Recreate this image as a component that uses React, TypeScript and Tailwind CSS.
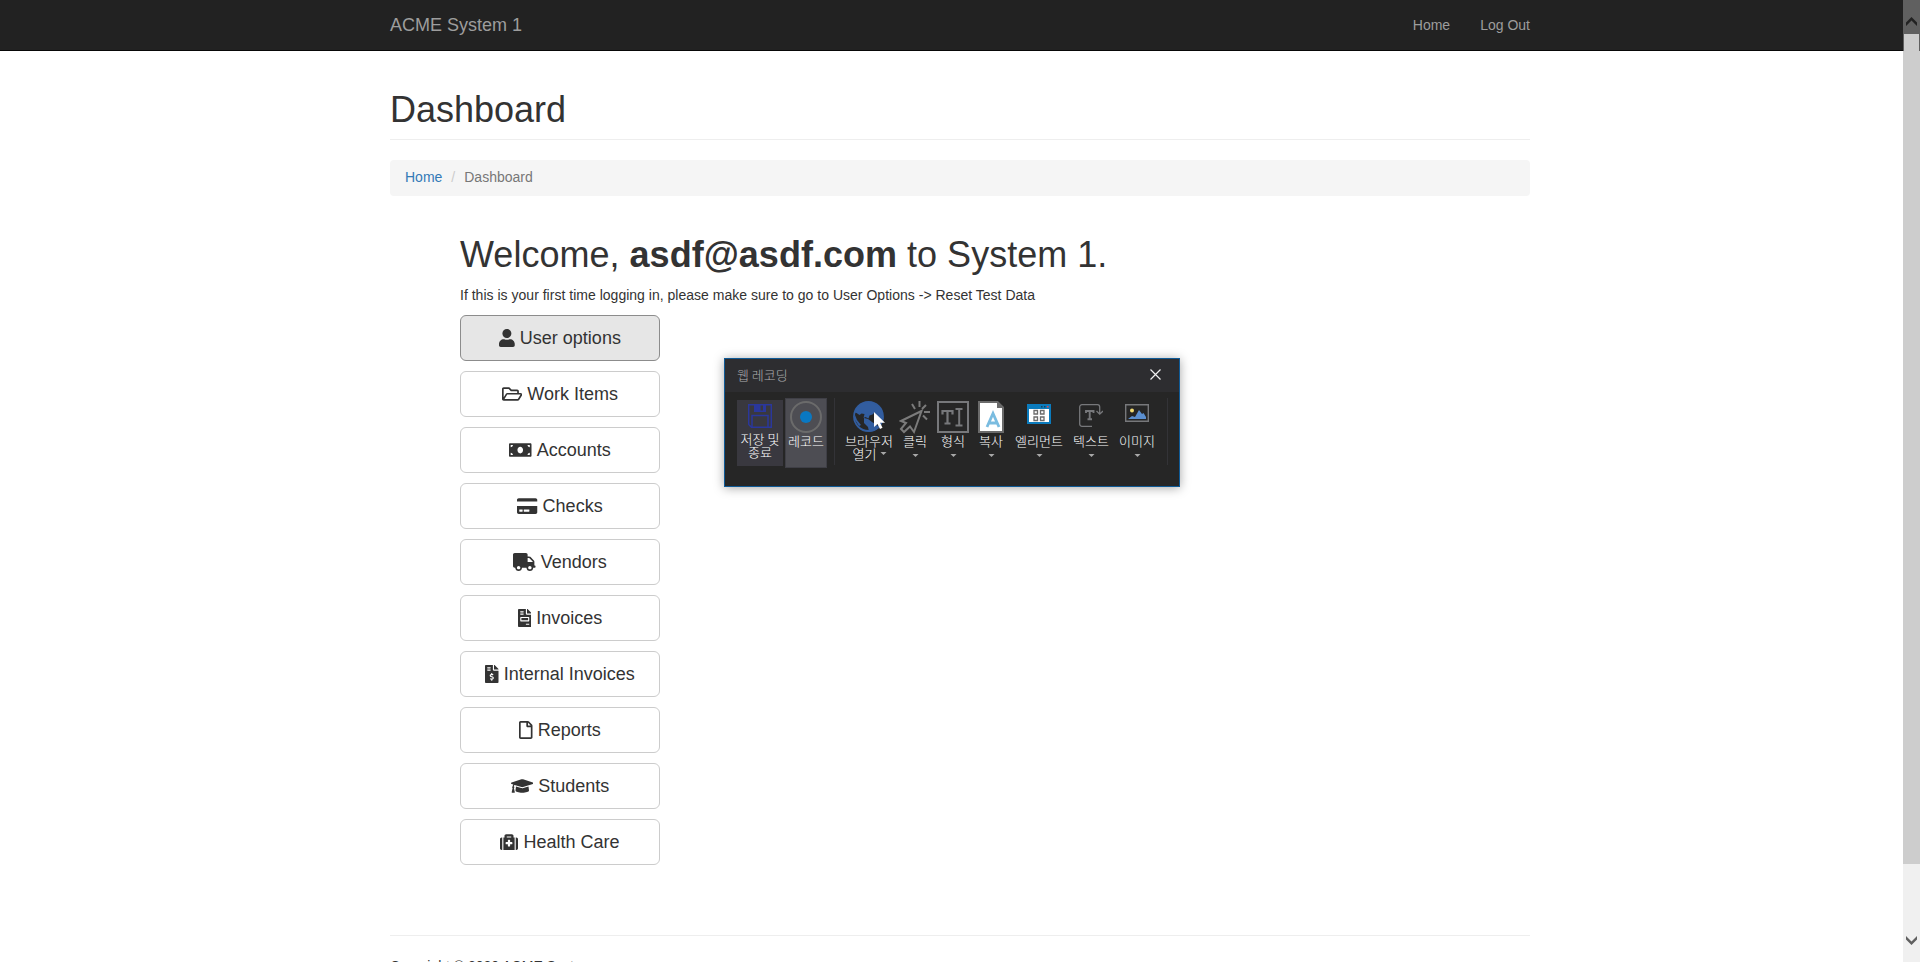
import React from "react";
import {
  FaUser, FaRegFolderOpen, FaMoneyBill, FaCreditCard, FaTruck, FaFileInvoice,
  FaFileInvoiceDollar, FaRegFile, FaGraduationCap, FaMedkit,
} from "react-icons/fa";

const MENU = [
  { label: "User options", Icon: FaUser, size: "w-[15.75px]", active: true },
  { label: "Work Items", Icon: FaRegFolderOpen, size: "w-[20.25px]" },
  { label: "Accounts", Icon: FaMoneyBill, size: "w-[22.5px]" },
  { label: "Checks", Icon: FaCreditCard, size: "w-[20.25px]" },
  { label: "Vendors", Icon: FaTruck, size: "w-[22.5px]" },
  { label: "Invoices", Icon: FaFileInvoice, size: "w-[13.5px]" },
  { label: "Internal Invoices", Icon: FaFileInvoiceDollar, size: "w-[13.5px]" },
  { label: "Reports", Icon: FaRegFile, size: "w-[13.5px]" },
  { label: "Students", Icon: FaGraduationCap, size: "w-[22.5px]" },
  { label: "Health Care", Icon: FaMedkit, size: "w-[18px]" },
];

function Caret() {
  return (
    <svg width="7" height="4" viewBox="0 0 7 4" className="shrink-0">
      <path d="M0.5 0h6L3.5 3z" fill="#a8a8a8" />
    </svg>
  );
}

function SaveIcon() {
  return (
    <svg width="24" height="24" viewBox="0 0 24 24" fill="none" stroke="#2a379c" strokeWidth="1.5" className="shrink-0">
      <path d="M0.7 0.7h22.6v22.6H3.5L0.7 20.5z" />
      <path d="M6 0h12v8H6z" fill="#2a379c" stroke="none" />
      <path d="M12.500 1.500h2.500v5h-2.500z" fill="#39383f" stroke="none" />
      <path d="M4 23V11.500h16V23" />
    </svg>
  );
}

function RecordIcon() {
  return (
    <svg width="32" height="32" viewBox="0 0 32 32" className="shrink-0">
      <circle cx="16" cy="16" r="15" fill="none" stroke="#6b6b6b" strokeWidth="2" />
      <circle cx="16" cy="16" r="6" fill="#0a78c2" />
    </svg>
  );
}

function GlobeIcon() {
  return (
    <svg width="32" height="32" viewBox="0 0 32 32" className="shrink-0">
      <circle cx="15.500" cy="15.500" r="14.500" fill="#262626" stroke="#325d9f" strokeWidth="1.800" />
      <path
        d="M6 4L12 1l8 .5 6 4 3.500 6 1 6-2 3-3-4-4-5-2 2-3 1-1 3-3-1.500-2 1 1-4-3-.5-2 1.500-3-2-2-.5 1-3z M11 17l4 1 4 3 5 3 2 3-5 3-5 .8-1-4.800-4-4z M2 14l2 5 4 5-2 1-4-6z"
        fill="#325d9f"
      />
      <path d="M21 11v15l3.500-3 2.500 5 2.500-1.200-2.400-5H32z" fill="#fff" />
    </svg>
  );
}

function ClickIcon() {
  return (
    <svg width="32" height="34" viewBox="0 0 32 34" fill="none" stroke="#7b7b7b" strokeWidth="2">
      <path d="M22.500 10L2 20l5 2-5 6 3 3 6-5.500 4 5.500z" />
      <path d="M13 3l3 5M20.500 0v6M27 4l-4 4M25 11h6M24 14.500l4 4" />
    </svg>
  );
}

function TypeIcon() {
  return (
    <svg width="32" height="32" viewBox="0 0 32 32" fill="none" stroke="#77787b" strokeWidth="2">
      <path d="M1 1h30v30H1z" />
      <path d="M5.500 13.500V10h10v3.500M10.500 10v12.500M7.500 22.500h6" strokeWidth="2.200" />
      <path d="M18.500 8h7M22.200 8v16.500M18.500 24.500h7" strokeWidth="2" />
    </svg>
  );
}

function CopyIcon() {
  return (
    <svg width="26" height="32" viewBox="0 0 26 32">
      <path d="M1 1h18.500L25 6.500V31H1z" fill="#fff" stroke="#6b6b6b" strokeWidth="2" />
      <path d="M19 1v6h6z" fill="#6b6b6b" />
      <path d="M9 26l6-13.500L21 26M11 22h8" fill="none" stroke="#7abce0" strokeWidth="2.800" />
    </svg>
  );
}

function ElementIcon() {
  return (
    <svg width="24" height="20" viewBox="0 0 24 20">
      <path d="M0 0h24v20H0z" fill="#0b7bbd" />
      <path d="M2 5h20v13H2z" fill="#fff" />
      <path d="M14 2h1.500v1.500H14zM17 2h1.500v1.500H17z" fill="#16425c" />
      <path d="M20 2h1.500v1.500H20z" fill="#e8434a" />
      <path d="M7 6.500h3.500v3.500H7zM13.500 6.500H17v3.500h-3.500zM7 13h3.500v3.500H7zM13.500 13H17v3.500h-3.500z" fill="none" stroke="#6b6b6b" strokeWidth="1.300" />
    </svg>
  );
}

function TextIcon() {
  return (
    <svg width="24" height="24" viewBox="0 0 24 24" fill="none" stroke="#77787b" strokeWidth="1.300">
      <path d="M13 22.300H3A2.300 2.300 0 0 1 .7 20V3A2.300 2.300 0 0 1 3 .7h15.500A2.300 2.300 0 0 1 20.700 3v7M17.500 7l3.200 3.200L24 7" />
      <path d="M7 9V7h7.500v2M10.700 7v8M8.500 15.300h4.500" strokeWidth="1.900" />
    </svg>
  );
}

function ImageIcon() {
  return (
    <svg width="24" height="18" viewBox="0 0 24 18">
      <path d="M.7.7h22.600v16.600H.7z" fill="#262626" stroke="#77787b" strokeWidth="1.400" />
      <circle cx="7" cy="6.500" r="2" fill="#f3dc72" />
      <path d="M3 15l4-3 3 1 4-7 3 4 1.500-1L21 13v2z" fill="#5b8fd0" />
    </svg>
  );
}

type ToolProps = { icon: React.ReactNode; label: string; width: string; small?: boolean };

function Tool({ icon, label, width, small }: ToolProps) {
  return (
    <div className={"flex shrink-0 flex-col items-center " + width}>
      <div className={"flex h-[36px] items-start justify-center " + (small ? "pt-[6px]" : "pt-[3px]")}>{icon}</div>
      <div className="mb-[7px] h-[13px] whitespace-nowrap">{label}</div>
      <Caret />
    </div>
  );
}

function Recorder() {
  return (
    <div className="absolute left-[724px] top-[358px] flex h-[129px] w-[456px] flex-col border border-[#0f5a96] bg-[#262626] font-['Noto_Sans_CJK_KR',sans-serif] text-[13px] font-light leading-[13px] text-white shadow-[0_1px_10px_rgba(0,0,0,0.35)]">
      <div className="flex h-[33px] shrink-0 items-center justify-between bg-[#2d2d30] pb-[3px] pl-[12px] pr-[18px] text-[#b0b0b0]">
        <span>웹 레코딩</span>
        <svg width="11" height="11" viewBox="0 0 11 11" stroke="#f1f1f1" strokeWidth="1.200">
          <path d="M.5.5l10 10M10.500.5l-10 10" />
        </svg>
      </div>
      <div className="flex pl-[12px] pt-[6px]">
        <div className="mt-[2px] flex h-[66px] w-[46px] shrink-0 flex-col items-center bg-[#39383f] pt-[4px]">
          <SaveIcon />
          <div className="mt-[4px] whitespace-nowrap">저장 및</div>
          <div className="whitespace-nowrap">종료</div>
        </div>
        <div className="ml-[2px] flex h-[70px] w-[42px] shrink-0 flex-col items-center border border-[#3f3f46] bg-[#4d4d53] pt-[2px]">
          <RecordIcon />
          <div className="mt-px whitespace-nowrap">레코드</div>
        </div>
        <div className="ml-[7px] h-[67px] w-px shrink-0 bg-[#333337]" />
        <div className="ml-[10px] flex w-[48px] shrink-0 flex-col items-center pt-[3px]">
          <GlobeIcon />
          <div className="mt-px whitespace-nowrap">브라우저</div>
          <div className="flex items-center gap-[4px] pl-[2px]">
            <span className="whitespace-nowrap">열기</span>
            <Caret />
          </div>
        </div>
        <div className="flex">
          <Tool icon={<ClickIcon />} label="클릭" width="w-[44px]" />
          <Tool icon={<TypeIcon />} label="형식" width="w-[32px]" />
          <Tool icon={<CopyIcon />} label="복사" width="w-[44px]" />
          <Tool icon={<ElementIcon />} label="엘리먼트" width="w-[52px]" small />
          <Tool icon={<TextIcon />} label="텍스트" width="w-[52px]" small />
          <Tool icon={<ImageIcon />} label="이미지" width="w-[40px]" small />
        </div>
        <div className="ml-[10px] h-[67px] w-px shrink-0 bg-[#333337]" />
      </div>
    </div>
  );
}

function ScrollBar() {
  return (
    <div className="flex h-full w-[17px] shrink-0 flex-col bg-[#f0f0f0]">
      <div className="flex h-[34px] items-end justify-center bg-[#606060] pb-[8px]">
        <svg width="11" height="9" viewBox="0 0 11 9"><path d="M0 5.500L5.500 0 11 5.500V9L5.500 3.500 0 9z" fill="#222" /></svg>
      </div>
      <div className="h-[17px] border-x border-[#606060] bg-[#cdcdcd]" />
      <div className="h-[813px] bg-[#cdcdcd]" />
      <div className="flex grow items-end justify-center pb-[17px]">
        <svg width="11" height="9" viewBox="0 0 11 9"><path d="M0 0l5.500 5.500L11 0v3.500L5.500 9 0 3.500z" fill="#606060" /></svg>
      </div>
    </div>
  );
}

export default function App() {
  return (
    <div className="relative flex h-[962px] w-[1920px] overflow-hidden bg-white font-['Liberation_Sans',Arial,sans-serif] text-[14px] leading-5 text-[#333]">
      <div className="flex min-w-0 grow flex-col">
        <nav className="h-[51px] shrink-0 border-b border-[#080808] bg-[#222] text-[#9d9d9d]">
          <div className="ml-[390px] flex h-[50px] w-[1140px] items-center justify-between">
            <a className="text-[18px]">ACME System 1</a>
            <div className="flex gap-[30px]">
              <a>Home</a>
              <a>Log Out</a>
            </div>
          </div>
        </nav>
        <main className="ml-[390px] w-[1140px] pt-[39px]">
          <h1 className="border-b border-[#eee] pb-[9px] text-[36px] leading-[39.6px]">Dashboard</h1>
          <div className="mt-5 flex rounded bg-[#f5f5f5] px-[15px] pb-[9px] pt-[7px]">
            <a className="text-[#337ab7]">Home</a>
            <span className="px-[9px] text-[#ccc]">/</span>
            <span className="text-[#777]">Dashboard</span>
          </div>
          <section className="pl-[70px] pt-[39px]">
            <h1 className="text-[36px] leading-[39.6px] tracking-[0.02px]">Welcome, <b>asdf@asdf.com</b> to System 1.</h1>
            <p className="mt-[11px] tracking-[0.015px]">If this is your first time logging in, please make sure to go to User Options -&gt; Reset Test Data</p>
            <div className="mt-[10px] flex w-[200px] flex-col gap-[10px]">
              {MENU.map(({ label, Icon, size, active }) => (
                <button
                  key={label}
                  className={
                    "flex h-[46px] items-center justify-center gap-[5px] rounded-md border text-[18px] leading-6 " +
                    (active ? "border-[#8c8c8c] bg-[#e6e6e6]" : "border-[#ccc] bg-white")
                  }
                >
                  <Icon className={"h-[18px] shrink-0 " + size} />
                  <span>{label}</span>
                </button>
              ))}
            </div>
          </section>
          <footer className="mt-[70px] border-t border-[#eee] pt-5">Copyright © 2020 ACME System</footer>
        </main>
      </div>
      <ScrollBar />
      <Recorder />
    </div>
  );
}
